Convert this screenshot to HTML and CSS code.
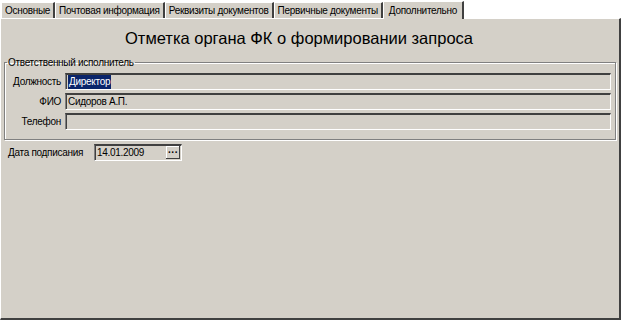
FILE: index.html
```html
<!DOCTYPE html>
<html lang="ru">
<head>
  <meta charset="UTF-8">
  <title>Дополнительно</title>
  <link rel="stylesheet" href="styles.css">
</head>
<body>
  <div class="window">
    <div class="tabs">
      <div class="tab">Основные</div>
      <div class="tab">Почтовая информация</div>
      <div class="tab">Реквизиты документов</div>
      <div class="tab">Первичные документы</div>
      <div class="tab active">Дополнительно</div>
    </div>
    <div class="panel">
      <h1 class="title">Отметка органа ФК о формировании запроса</h1>
      <fieldset class="group">
        <legend>Ответственный исполнитель</legend>
        <div class="row">
          <label>Должность</label>
          <div class="field"><span class="selected">Директор</span></div>
        </div>
        <div class="row">
          <label>ФИО</label>
          <div class="field">Сидоров А.П.</div>
        </div>
        <div class="row">
          <label>Телефон</label>
          <div class="field"></div>
        </div>
      </fieldset>
      <div class="date-row">
        <label>Дата подписания</label>
        <div class="field date">
          <span>14.01.2009</span>
          <button class="dots">···</button>
        </div>
      </div>
    </div>
  </div>
</body>
</html>
```

FILE: styles.css
```css
/* General */
body {
  margin: 0;
  background: #ffffff;
  font-family: 'Liberation Sans', Arial, sans-serif;
  font-size: 10px;
  letter-spacing: -0.3px;
  color: #000;
}

.window {
  width: 621px;
  height: 320px;
  display: flex;
  flex-direction: column;
}

/* Tabs */
.tabs {
  display: flex;
  height: 18px;
  padding-left: 1px;
  align-items: flex-end;
}

.tab {
  height: 15px;
  line-height: 15px;
  padding: 0 3px;
  background: #d4d0c8;
  border-top: 1px solid #ffffff;
  border-left: 1px solid #ffffff;
  border-right: 2px solid #404040;
  white-space: nowrap;
}

.tab.active {
  height: 17px;
  line-height: 17px;
  margin-bottom: -1px;
  position: relative;
  padding: 0 5px;
}

/* Panel */
.panel {
  flex: 1;
  background: #d4d0c8;
  border-top: 1px solid #ffffff;
  border-left: 1px solid #ffffff;
  border-right: 2px solid #404040;
  border-bottom: 2px solid #404040;
  padding: 0 3px;
}

.title {
  margin: 7px 0 0;
  padding-right: 22px;
  text-align: center;
  font-family: 'Liberation Sans', Arial, sans-serif;
  font-weight: normal;
  font-size: 16.5px;
  letter-spacing: 0;
  height: 24px;
  line-height: 24px;
}

/* Group box */
.group {
  margin: 7px 0 0;
  padding: 3px 4px 8px 0;
  border: 1px solid #808080;
  box-shadow: inset 1px 1px 0 #ffffff, 1px 1px 0 #ffffff;
}

.group legend {
  padding: 0 1px;
  margin-left: 2px;
}

.row {
  display: flex;
  align-items: center;
  height: 20px;
}

.row label {
  width: 56px;
  text-align: right;
  padding-right: 4px;
}

.field {
  flex: 1;
  height: 14px;
  line-height: 14px;
  padding-left: 2px;
  border-top: 2px solid #404040;
  border-left: 1px solid #808080;
  border-right: 1px solid #ffffff;
  border-bottom: 1px solid #ffffff;
  box-shadow: inset 1px 0 0 #404040;
  background: #d4d0c8;
  display: flex;
  align-items: center;
}

.selected {
  background: #0a246a;
  color: #ffffff;
  padding: 0 1px;
}

/* Date row */
.date-row {
  display: flex;
  align-items: center;
  margin-top: 2px;
  height: 20px;
}

.date-row label {
  width: 86px;
  padding-left: 4px;
  white-space: nowrap;
}

.field.date {
  flex: none;
  width: 83px;
  justify-content: space-between;
  padding-right: 1px;
}

.dots {
  width: 14px;
  height: 13px;
  padding: 0;
  border: none;
  background: #d4d0c8;
  box-shadow: inset -1px -1px 0 #404040, inset 1px 1px 0 #ffffff;
  font-family: 'Liberation Sans', Arial, sans-serif;
  font-size: 10px;
  line-height: 8px;
  font-weight: bold;
  color: #000;
}
```
